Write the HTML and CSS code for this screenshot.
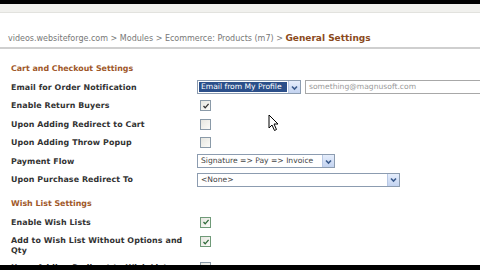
FILE: index.html
```html
<!DOCTYPE html>
<html>
<head>
<meta charset="utf-8">
<link rel="stylesheet" href="styles.css">
</head>
<body>
<div class="topbar"></div>
<div class="toolbar"></div>
<div class="crumbs">videos.websiteforge.com &gt; Modules &gt; Ecommerce: Products (m7) &gt; <span class="current">General Settings</span></div>

<div class="section-title first">Cart and Checkout Settings</div>
<div class="row">
  <div class="label">Email for Order Notification</div>
  <div class="field">
    <div class="select sel-email"><span class="sel-text hl">Email from My Profile</span><span class="arrow"><svg width="9" height="9" viewBox="0 0 9 9"><path d="M2 3.5 L4.5 6 L7 3.5" fill="none" stroke="#3a5a8c" stroke-width="1.6"/></svg></span></div>
    <div class="textbox">something@magnusoft.com</div>
  </div>
</div>
<div class="row">
  <div class="label">Enable Return Buyers</div>
  <div class="field"><span class="cb"><svg width="8" height="8" viewBox="0 0 8 8"><path d="M1.5 4 L3.2 5.8 L6.6 1.8" fill="none" stroke="#333" stroke-width="1.3"/></svg></span></div>
</div>
<div class="row">
  <div class="label">Upon Adding Redirect to Cart</div>
  <div class="field"><span class="cb"></span></div>
</div>
<div class="row">
  <div class="label">Upon Adding Throw Popup</div>
  <div class="field"><span class="cb"></span></div>
</div>
<div class="row">
  <div class="label">Payment Flow</div>
  <div class="field">
    <div class="select sel-pay"><span class="sel-text">Signature =&gt; Pay =&gt; Invoice</span><span class="arrow"><svg width="9" height="9" viewBox="0 0 9 9"><path d="M2 3.5 L4.5 6 L7 3.5" fill="none" stroke="#3a5a8c" stroke-width="1.6"/></svg></span></div>
  </div>
</div>
<div class="row">
  <div class="label">Upon Purchase Redirect To</div>
  <div class="field">
    <div class="select sel-none"><span class="sel-text">&lt;None&gt;</span><span class="arrow"><svg width="9" height="9" viewBox="0 0 9 9"><path d="M2 3.5 L4.5 6 L7 3.5" fill="none" stroke="#3a5a8c" stroke-width="1.6"/></svg></span></div>
  </div>
</div>

<div class="section-title">Wish List Settings</div>
<div class="row">
  <div class="label">Enable Wish Lists</div>
  <div class="field"><span class="cb green"><svg width="8" height="8" viewBox="0 0 8 8"><path d="M1.5 4 L3.2 5.8 L6.6 1.8" fill="none" stroke="#2f6b3a" stroke-width="1.3"/></svg></span></div>
</div>
<div class="row tall">
  <div class="label">Add to Wish List Without Options and Qty</div>
  <div class="field"><span class="cb green"><svg width="8" height="8" viewBox="0 0 8 8"><path d="M1.5 4 L3.2 5.8 L6.6 1.8" fill="none" stroke="#2f6b3a" stroke-width="1.3"/></svg></span></div>
</div>
<div class="row">
  <div class="label">Upon Adding Redirect to Wish List</div>
  <div class="field"><span class="cb"></span></div>
</div>

<svg class="cursor" width="12" height="18" viewBox="0 0 12 18"><path d="M1 1 L1 14 L4 11 L6.5 16.5 L8.5 15.5 L6 10 L10 10 Z" fill="#fff" stroke="#000" stroke-width="1"/></svg>
<div class="bottombar"></div>
</body>
</html>
```

FILE: styles.css
```css
html, body {
  margin: 0;
  padding: 0;
  background: #fff;
  overflow: hidden;
  width: 480px;
  height: 270px;
}
body {
  font-family: "DejaVu Sans", Verdana, sans-serif;
  color: #333;
  position: relative;
}
.topbar {
  height: 4px;
  background: #000;
}
.toolbar {
  height: 8px;
  background: #f1f1ee;
  border-bottom: 1px solid #e2e2de;
}
.crumbs {
  padding: 18px 0 1px 8px;
  line-height: 14px;
  font-size: 8px;
  color: #777;
  border-bottom: 2px solid #cfcfcf;
  white-space: nowrap;
}
.crumbs .current {
  color: #8b4a1c;
  font-weight: bold;
  font-size: 9px;
}
.section-title {
  margin: 8px 0 2px 11px;
  height: 14px;
  line-height: 14px;
  font-size: 7.9px;
  font-weight: bold;
  color: #a0582a;
}
.section-title.first {
  margin-top: 13px;
}
.row {
  display: flex;
  height: 18.5px;
  align-items: center;
  padding-left: 11px;
}
.label {
  flex: 0 0 186px;
  width: 186px;
  font-size: 7.9px;
  font-weight: bold;
  color: #333;
  line-height: 9.5px;
  letter-spacing: 0.1px;
}
.row.tall {
  height: 26.5px;
  align-items: flex-start;
  padding-top: 4.5px;
  box-sizing: border-box;
}
.row.tall .label {
  flex: 0 0 174px;
  width: 174px;
  margin-right: 12px;
}
.field {
  display: flex;
  align-items: center;
  gap: 4px;
  flex: 0 0 auto;
}
.cb {
  display: inline-flex;
  align-items: center;
  justify-content: center;
  width: 9px;
  height: 9px;
  border: 1px solid #8a9aa8;
  background: linear-gradient(135deg, #e6e6e0, #fbfbf8);
  margin-left: 3px;
}
.cb.green {
  border-color: #6f9a78;
}
.select {
  display: flex;
  align-items: center;
  height: 14px;
  box-sizing: border-box;
  border: 1px solid #8c9cb0;
  background: #fff;
  font-family: "DejaVu Sans", Verdana, sans-serif;
  font-size: 7.6px;
  color: #444;
}
.sel-text {
  flex: 1;
  padding-left: 3px;
  white-space: nowrap;
  line-height: 12px;
  overflow: hidden;
}
.sel-text.hl {
  background: #2b4f8a;
  color: #fff;
  margin: 1px;
  padding-left: 2px;
  line-height: 10px;
}
.arrow {
  flex: 0 0 11px;
  width: 11px;
  height: 12px;
  display: flex;
  align-items: center;
  justify-content: center;
  background: linear-gradient(#e6eefc, #c3d3f0);
  border-left: 1px solid #b8c8e4;
}
.sel-email { width: 104px; }
.sel-pay { width: 138px; }
.sel-none { width: 203px; }
.textbox {
  width: 175px;
  height: 14px;
  box-sizing: border-box;
  border: 1px solid #a8a8a8;
  border-right: none;
  font-size: 7.6px;
  color: #9a9a9a;
  line-height: 12px;
  padding-left: 3px;
  white-space: nowrap;
}
.cursor {
  position: absolute;
  left: 268px;
  top: 114px;
}
.bottombar {
  position: absolute;
  left: 0;
  right: 0;
  bottom: 0;
  height: 5px;
  background: #000;
}
```
